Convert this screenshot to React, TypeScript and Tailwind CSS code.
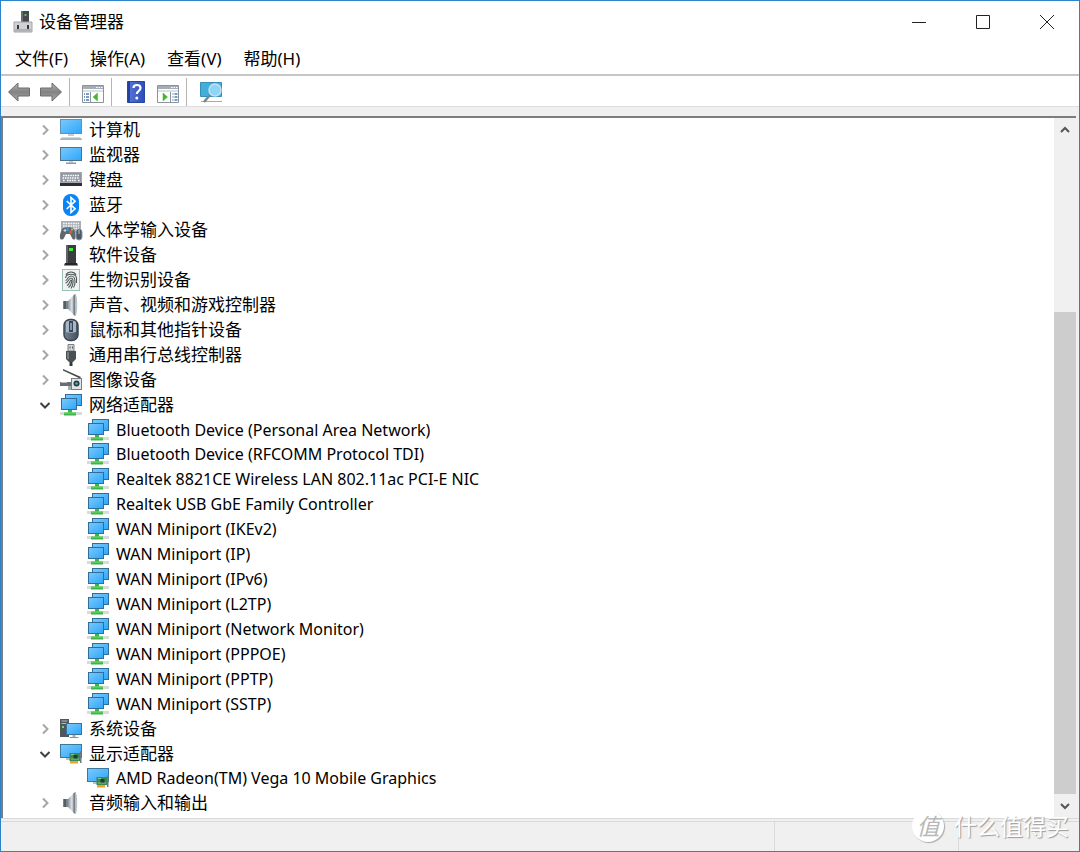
import type { ReactNode } from "react";

type IconName =
    | "computer" | "monitor" | "keyboard" | "bluetooth" | "hid" | "software" | "biometric"
    | "speaker" | "mouse" | "usb" | "camera" | "network" | "system" | "display";

type Device = { label: string; icon: IconName; open?: boolean; children?: string[] };

const devices: Device[] = [
    { label: "计算机", icon: "computer" },
    { label: "监视器", icon: "monitor" },
    { label: "键盘", icon: "keyboard" },
    { label: "蓝牙", icon: "bluetooth" },
    { label: "人体学输入设备", icon: "hid" },
    { label: "软件设备", icon: "software" },
    { label: "生物识别设备", icon: "biometric" },
    { label: "声音、视频和游戏控制器", icon: "speaker" },
    { label: "鼠标和其他指针设备", icon: "mouse" },
    { label: "通用串行总线控制器", icon: "usb" },
    { label: "图像设备", icon: "camera" },
    {
        label: "网络适配器",
        icon: "network",
        open: true,
        children: [
            "Bluetooth Device (Personal Area Network)",
            "Bluetooth Device (RFCOMM Protocol TDI)",
            "Realtek 8821CE Wireless LAN 802.11ac PCI-E NIC",
            "Realtek USB GbE Family Controller",
            "WAN Miniport (IKEv2)",
            "WAN Miniport (IP)",
            "WAN Miniport (IPv6)",
            "WAN Miniport (L2TP)",
            "WAN Miniport (Network Monitor)",
            "WAN Miniport (PPPOE)",
            "WAN Miniport (PPTP)",
            "WAN Miniport (SSTP)",
        ],
    },
    { label: "系统设备", icon: "system" },
    { label: "显示适配器", icon: "display", open: true, children: ["AMD Radeon(TM) Vega 10 Mobile Graphics"] },
    { label: "音频输入和输出", icon: "speaker" },
];

const menus = ["文件(F)", "操作(A)", "查看(V)", "帮助(H)"];

// every device icon is drawn on a 24x24 grid
const drawings: Record<IconName, ReactNode> = {
    computer: (
        <>
            <rect x="1.5" y="1.5" width="21" height="14" fill="url(#screen)" stroke="#5b93bb" />
            <path d="M9 16h6v2H9z" fill="#c3ccd3" />
            <path d="M3 19.500h18l2 1.500v1H1v-1z" fill="#a9b6c0" />
        </>
    ),
    monitor: (
        <>
            <rect x="1.5" y="4.5" width="21" height="13" fill="url(#screen)" stroke="#4a7390" />
            <path d="M10 18h4v1.5h-4z" fill="#c4ccd2" />
            <path d="M7 19.5h10V21H7z" fill="#8799a6" />
        </>
    ),
    keyboard: (
        <>
            <path d="M1 4h22v11H1z" fill="#a4a9b1" />
            <path d="M2 5h20v9H2z" fill="#9298a1" />
            <path d="M4 7.500h16M3.500 10h17M4 12.500h2m2 0h9m2 0h2" stroke="#fff" strokeWidth="1.4" strokeDasharray="1.6 .8" />
            <path d="M1 15h22v3H1z" fill="#2d3034" />
        </>
    ),
    bluetooth: (
        <>
            <rect x="4" y="1" width="16" height="22" rx="7.5" fill="#0a84f5" />
            <path d="M7.7 8l8.4 7.8L12 19.5V4.5l4.1 3.7L7.7 16" fill="none" stroke="#fff" strokeWidth="1.6" />
        </>
    ),
    hid: (
        <>
            <path d="M2 3h20v12H2z" fill="#a9afb5" />
            <path d="M4 5.5h16M4 8h16M4 10.5h16" stroke="#f5f7f8" strokeWidth="1.3" strokeDasharray="1.7 .8" />
            <path d="M4 10c2-1 8-1 10 0 2 2 3 7 2.500 10-.5 2-2.500 2-3.500 0l-2-4H7l-2 4c-1 2-3.500 2-4 0C.6 17 2 12 4 10z" fill="#5f676f" />
            <path d="M4.500 12.500h3M6 11v3" stroke="#d6dce0" />
            <circle cx="8.500" cy="11.500" r="1.500" fill="#2b9be6" />
            <circle cx="11.500" cy="14" r="1.500" fill="#ef5a28" />
            <circle cx="13" cy="11.500" r="1" fill="#f3b83c" />
            <rect x="17" y="11" width="6" height="11" rx="3" fill="#4b5966" stroke="#8d98a1" />
            <path d="M20 12v4" stroke="#b9c7d1" />
        </>
    ),
    software: (
        <>
            <path d="M7 2h10v18H7z" fill="#3a3d3f" />
            <path d="M7 2h2v18H7z" fill="#606466" />
            <rect x="10" y="5" width="4" height="3" fill="#3bed3b" />
            <path d="M6 20h12l1 2.500H5z" fill="#25282a" />
        </>
    ),
    biometric: (
        <>
            <rect x="3.500" y="1.500" width="17" height="21" fill="#eff4f2" stroke="#9fc0b7" />
            <g fill="none" stroke="#50595a" strokeWidth="1.100">
                <path d="M7 7c2-4 8-4 10 0M6.500 10c1-5 10-5 11 0v5M6.500 12.500c2 0 2-4.500 5.500-4.500s4 3 4 6c0 2-.5 4-1.500 5.500" />
                <path d="M6.500 15c3-.5 3-5 5.500-5s2.300 4 1.800 6-1 3.500-1.800 4.500M8 17.500c3-1.500 3-5.500 4-5.500 1.500 0 .5 5-2.500 7.500" />
            </g>
        </>
    ),
    speaker: (
        <>
            <path d="M4 8h5v8H4z" fill="#7c8389" />
            <path d="M5 8h2v8H5z" fill="#565e65" />
            <path d="M9 8l6-6v20l-6-6z" fill="url(#cone)" />
            <path d="M14.500 2l2-1v22l-2-1z" fill="#777f86" />
            <path d="M16.500 1.500c1.600 5 1.600 16 0 21" fill="none" stroke="#b3bbc2" />
        </>
    ),
    mouse: (
        <>
            <rect x="5" y="1.500" width="14" height="21" rx="6" fill="url(#shell)" stroke="#3b4552" strokeWidth="1.500" />
            <path d="M7 4c2-2 8-2 10 0v10c-2 1-8 1-10 0z" fill="#a5b7c8" />
            <path d="M10 3h4v11h-4z" fill="#394653" />
            <path d="M12 5v7" stroke="#adc9e1" strokeWidth="1.300" />
        </>
    ),
    usb: (
        <>
            <path d="M9 1.500h6V8H9z" fill="#d4d7d9" stroke="#797f83" />
            <path d="M10.500 3.500h1v2h-1zm2.500 0h1v2h-1z" fill="#4f5559" />
            <path d="M7 8h10v8l-3 3h-4l-3-3z" fill="#4b5053" />
            <path d="M8 9h2v7H8z" fill="#777d80" />
            <path d="M10.500 19h3v4h-3z" fill="#34383a" />
        </>
    ),
    camera: (
        <>
            <path d="M4 1l18 8-1 1.500L4 2.500z" fill="#45484a" />
            <path d="M1 14h11v4H1z" fill="#686d70" />
            <path d="M2 14h6v1H2z" fill="#b9bdbf" />
            <path d="M9 18h5v4H9z" fill="#a5aaac" />
            <rect x="12.500" y="10.500" width="10" height="11" fill="#e2e5e6" stroke="#777d80" />
            <circle cx="17.500" cy="15.500" r="3" fill="#2d3b40" />
            <circle cx="17.500" cy="15.500" r="1.200" fill="#3dbac4" />
        </>
    ),
    network: (
        <>
            <rect x="6.500" y="1.500" width="16" height="11" fill="url(#screen)" stroke="#2f6e9b" />
            <path d="M1 19h22v3H1z" fill="#d7dcda" />
            <rect x="2.500" y="5.500" width="15" height="11" fill="url(#screen)" stroke="#2f6e9b" />
            <path d="M9 17h4v2.500h4v3H5v-3h4z" fill="#3cb54a" />
            <path d="M5 19.500h12v1H5z" fill="#7bdb71" />
        </>
    ),
    system: (
        <>
            <path d="M1 2h9v18H1z" fill="#50575b" />
            <path d="M2.500 4h6M2.500 6.500h6" stroke="#b5bcc0" />
            <rect x="3" y="9" width="2" height="2" fill="#5be34c" />
            <rect x="7.500" y="6.500" width="15" height="11" fill="url(#screen)" stroke="#3b7297" />
            <path d="M13.500 18h3v2h-3z" fill="#a4afb7" />
            <path d="M10.500 20h9v1h-9z" fill="#8292a0" />
        </>
    ),
    display: (
        <>
            <rect x="1.500" y="2.500" width="21" height="13" fill="url(#screen)" stroke="#3c789d" />
            <path d="M7 16h4v2H7z" fill="#b4bfc6" />
            <path d="M10.500 11h11v8h-11z" fill="#3b8a55" />
            <path d="M12 12.500h3M12 17h8" stroke="#84c48e" />
            <rect x="14.500" y="13" width="4" height="3.500" fill="#1d3f2b" />
            <path d="M21 9.500h1.500V21H21z" fill="#6d7a80" />
            <path d="M11 19h8v2.500h-8z" fill="#f0a224" />
        </>
    ),
};

function DeviceIcon({ name }: { name: IconName }) {
    return (
        <svg viewBox="0 0 24 24" className="size-6 shrink-0" aria-hidden="true">
            {drawings[name]}
        </svg>
    );
}

function Chevron({ className, d }: { className: string; d: string }) {
    return (
        <svg viewBox="0 0 12 12" className={"size-3 shrink-0 " + className} fill="none" stroke="currentColor" strokeWidth="2" aria-hidden="true">
            <path d={d} />
        </svg>
    );
}

function Gradients() {
    return (
        <svg className="absolute size-0" aria-hidden="true">
            <defs>
                <linearGradient id="screen" x1="0" y1="0" x2="1" y2="1">
                    <stop offset="0" stopColor="#7cc9fa" />
                    <stop offset=".5" stopColor="#54b8fb" />
                    <stop offset="1" stopColor="#2da6fa" />
                </linearGradient>
                <linearGradient id="cone" x1="0" x2="1">
                    <stop offset="0" stopColor="#8b939a" />
                    <stop offset=".6" stopColor="#d8dde1" />
                    <stop offset="1" stopColor="#a5adb4" />
                </linearGradient>
                <linearGradient id="shell" x1="0" x2="1">
                    <stop offset="0" stopColor="#72808f" />
                    <stop offset="1" stopColor="#46525f" />
                </linearGradient>
                <linearGradient id="arrow" x1="0" y1="0" x2="0" y2="1">
                    <stop offset="0" stopColor="#b5b5b5" />
                    <stop offset=".5" stopColor="#828282" />
                    <stop offset="1" stopColor="#a8a8a8" />
                </linearGradient>
                <linearGradient id="book" x1="0" x2="1">
                    <stop offset="0" stopColor="#5877d6" />
                    <stop offset="1" stopColor="#2b4dbd" />
                </linearGradient>
            </defs>
        </svg>
    );
}

function TitleBar() {
    return (
        <header className="flex h-[42px] items-center pl-3">
            <svg viewBox="0 0 20 22" className="h-[22px] w-5" aria-hidden="true">
                <path d="M8 0h8v12H8z" fill="#45494b" />
                <path d="M8 0h2v12H8z" fill="#696d70" />
                <rect x="11.500" y="3" width="2" height="2" fill="#4dc95b" />
                <path d="M1 11h18v10H1z" fill="#cfd1d3" stroke="#a1a4a6" />
                <path d="M2 18h16v2.500H2z" fill="#aeb1b3" />
                <path d="M4 14h2v4H4zm10 0h2v4h-2z" fill="#35383a" />
            </svg>
            <h1 className="ml-[6px] text-[17px] leading-6">设备管理器</h1>
            <div className="ml-auto flex h-full">
                <button aria-label="最小化" className="flex w-16 items-center justify-center">
                    <svg viewBox="0 0 16 16" className="size-4" stroke="#222"><path d="M1 8.500h14" /></svg>
                </button>
                <button aria-label="最大化" className="flex w-16 items-center justify-center">
                    <svg viewBox="0 0 16 16" className="size-4" fill="none" stroke="#222"><path d="M1.500 1.500h13v13h-13z" /></svg>
                </button>
                <button aria-label="关闭" className="flex w-16 items-center justify-center">
                    <svg viewBox="0 0 16 16" className="size-4" stroke="#222"><path d="M1 1l14 14M15 1L1 15" /></svg>
                </button>
            </div>
        </header>
    );
}

function Panel({ flip }: { flip?: boolean }) {
    return (
        <svg viewBox="0 0 24 20" className="h-5 w-6" aria-hidden="true">
            <path d="M1.500 1.500h21v17h-21z" fill="#fff" stroke="#8a929a" />
            <path d="M2 2h20v3H2z" fill="#a5adb5" />
            <path d="M15 3.500h1.500m1 0H19m1 0h1.500" stroke="#fff" />
            <path d="M2 6h20v2H2z" fill="#dce0e4" />
            <path d={flip ? "M14.500 8v10" : "M9.500 8v10"} stroke="#8a929a" />
            <path d={flip ? "M16.500 10h1m1 0h3m-5 3h1m1 0h3m-5 3h1m1 0h3" : "M3 10h1m1 0h3m-5 3h1m1 0h3m-5 3h1m1 0h3"} stroke="#4e7eb5" strokeWidth="1.500" />
            <path d={flip ? "M7 9l4.500 4L7 17z" : "M16.500 9L12 13l4.500 4z"} fill="#42b82d" stroke="#42b82d" strokeWidth=".5" />
        </svg>
    );
}

function Toolbar() {
    return (
        <div className="flex h-[31px] items-center border-b border-[#dedede] pt-[2px] pl-[6px]">
            <button aria-label="后退">
                <svg viewBox="0 0 24 20" className="h-5 w-6"><path d="M1.500 10L11 1v5h11.500v8H11v5z" fill="url(#arrow)" stroke="#6c6c6c" /></svg>
            </button>
            <button aria-label="前进" className="ml-2">
                <svg viewBox="0 0 24 20" className="h-5 w-6"><path d="M22.500 10L13 1v5H1.500v8H13v5z" fill="url(#arrow)" stroke="#6c6c6c" /></svg>
            </button>
            <div className="ml-[6px] h-7 w-px bg-[#b5b5b5]" />
            <button aria-label="显示/隐藏控制台树" className="ml-[11px] pt-1"><Panel /></button>
            <div className="ml-[6px] h-7 w-px bg-[#b5b5b5]" />
            <button aria-label="帮助" className="ml-[14px]">
                <svg viewBox="0 0 20 24" className="h-6 w-5">
                    <path d="M1.500 1.500h17v21h-17z" fill="url(#book)" stroke="#2947a2" />
                    <path d="M2 2h2v20H2z" fill="#2440a0" />
                    <path d="M7.500 8c0-4 7-4 7 0 0 3-3.700 2.700-3.700 6" fill="none" stroke="#fff" strokeWidth="2.200" />
                    <circle cx="10.800" cy="18" r="1.500" fill="#fff" />
                </svg>
            </button>
            <button aria-label="显示/隐藏操作窗格" className="ml-[10px] pt-1"><Panel flip /></button>
            <div className="ml-[6px] h-7 w-px bg-[#b5b5b5]" />
            <button aria-label="扫描检测硬件改动" className="ml-3">
                <svg viewBox="0 0 24 22" className="h-[22px] w-6">
                    <path d="M1.500 1.500h21v14h-21z" fill="#43aeda" stroke="#368fb9" />
                    <path d="M2 20h21v1H2z" fill="#9aafba" />
                    <path d="M11 14l-6 7" stroke="#728995" strokeWidth="2.500" />
                    <circle cx="16" cy="9" r="6" fill="#8fd3f6" stroke="#c3e3f2" strokeWidth="1.500" />
                </svg>
            </button>
        </div>
    );
}

function DeviceTree() {
    return (
        <ul className="flex min-w-0 flex-1 flex-col pb-[2px] text-[17px] leading-6">
            {devices.flatMap((device) => [
                <li key={device.label} className="flex flex-1 items-center pl-9">
                    <button aria-label={device.label} aria-expanded={!!device.open} className="flex">
                        {device.open
                            ? <Chevron className="text-[#404040]" d="M1.500 4L6 8.500 10.500 4" />
                            : <Chevron className="text-[#a6a6a6]" d="M4 1.500L8.500 6 4 10.500" />}
                    </button>
                    <span className="ml-2 flex"><DeviceIcon name={device.icon} /></span>
                    <span className="ml-[6px]">{device.label}</span>
                </li>,
                ...(device.children ?? []).map((child) => (
                    <li key={child} className="flex flex-1 items-center pl-[83px]">
                        <DeviceIcon name={device.icon} />
                        <span className="ml-[6px] text-[16px]">{child}</span>
                    </li>
                )),
            ])}
        </ul>
    );
}

function ScrollBar() {
    return (
        <div className="flex w-[22px] flex-col bg-[#f0f0f0]">
            <button aria-label="向上滚动" className="flex h-6 items-center justify-center text-[#555]">
                <Chevron className="" d="M2 8l4-4 4 4" />
            </button>
            <div className="flex flex-1 flex-col">
                <div className="basis-[26%]" />
                <div className="flex-1 bg-[#cdcdcd]" />
            </div>
            <button aria-label="向下滚动" className="flex h-6 items-center justify-center text-[#555]">
                <Chevron className="" d="M2 4l4 4 4-4" />
            </button>
        </div>
    );
}

function Watermark() {
    return (
        <div className="absolute right-[10px] bottom-[9px] flex items-center gap-[10px] text-white">
            <span className="flex size-8 items-center justify-center rounded-full bg-white text-[23px] leading-8 text-[#b8b8b8] italic shadow-[1px_1px_1px_#aaa]">值</span>
            <span className="text-[23px] leading-8 [text-shadow:1px_1px_1px_#999]">什么值得买</span>
        </div>
    );
}

export default function App() {
    return (
        <div className="relative flex min-h-screen flex-col border border-[#2b84cb] bg-white font-['Noto_Sans','Noto_Sans_CJK_SC',sans-serif] text-black">
            <Gradients />
            <TitleBar />
            <nav className="flex h-[33px] items-center gap-[22px] border-b-2 border-[#c6c6c6] pl-[14px]">
                {menus.map((menu) => (
                    <button key={menu} className="text-[17px] leading-6">{menu}</button>
                ))}
            </nav>
            <Toolbar />
            <main className="flex flex-1 flex-col bg-[#f0f0f0] pt-[9px]">
                <div className="mr-[3px] flex flex-1 border-t-2 border-l-2 border-[#7c7c7c] bg-white">
                    <DeviceTree />
                    <ScrollBar />
                </div>
            </main>
            <footer className="flex h-[33px] border-t border-[#dadada] bg-[#f0f0f0] pt-[2px]">
                <div className="flex-1 border-t border-r border-[#dadada]" />
                <div className="w-[184px] border-t border-r border-[#dadada]" />
                <div className="w-[120px] border-t border-[#dadada]" />
            </footer>
            <Watermark />
        </div>
    );
}
